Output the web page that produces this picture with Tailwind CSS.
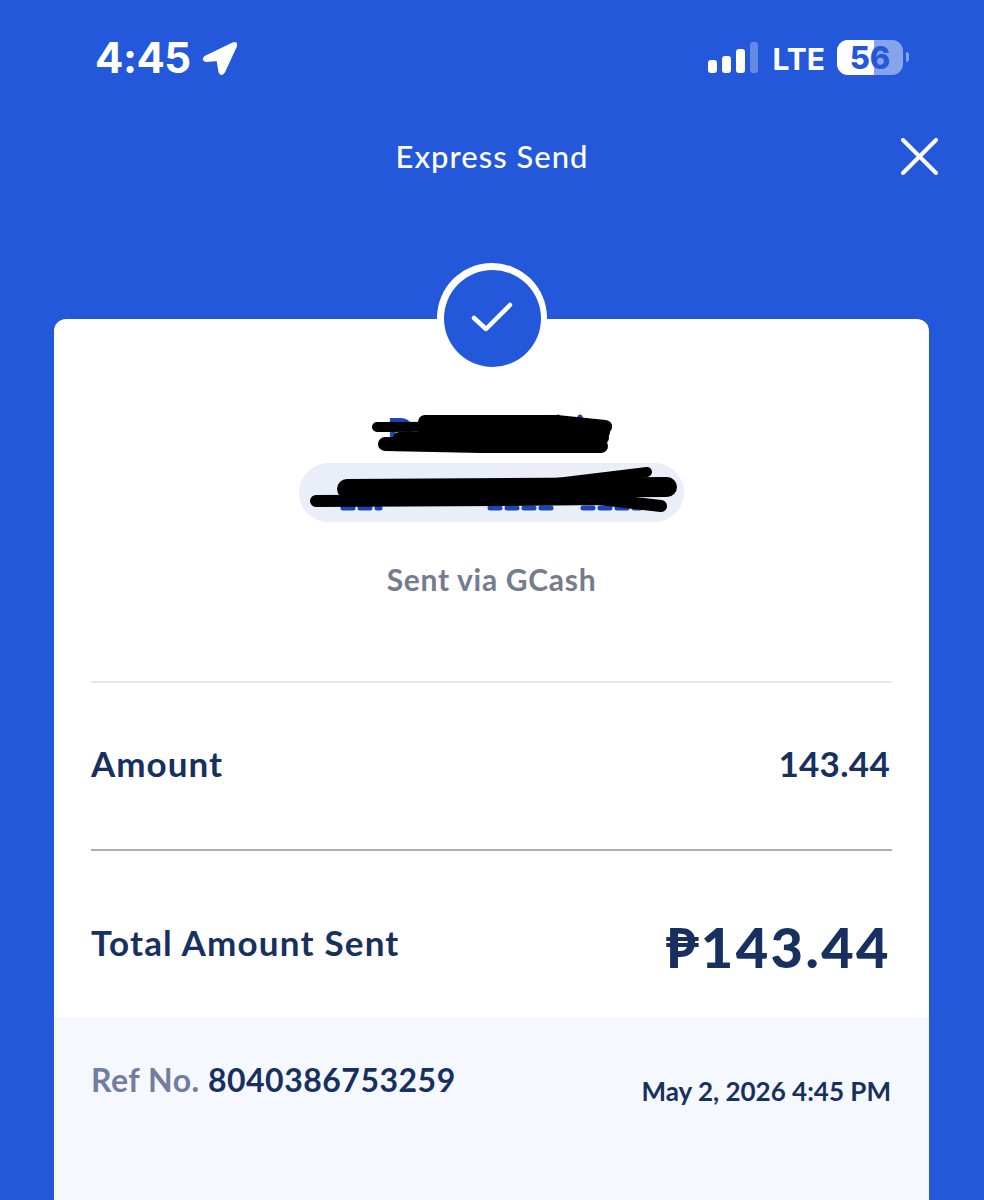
<!DOCTYPE html>
<html lang="en">
<head>
  <meta charset="UTF-8" />
  <meta name="viewport" content="width=device-width, initial-scale=1.0"/>
  <title>Express Send</title>
  <script src="https://cdn.jsdelivr.net/npm/@tailwindcss/browser@4"></script>
</head>
<body class="bg-[#2358db] h-[1200px] overflow-hidden font-['Lato','Liberation_Sans',sans-serif]">

  <!-- Status bar -->
  <div class="h-[118px] pl-[95px] pr-[75px] pt-[38px] flex justify-between items-start text-white font-['Inter',sans-serif]">
    <div class="flex items-center gap-[11px] h-[40px]">
      <span class="text-[42px] leading-[40px] font-bold tracking-[-0.5px]">4:45</span>
      <svg class="w-[36px] h-[36px]" viewBox="0 0 36 36"><path d="M3 17 L31 3.5 Q35 2 34 6 L22 32 Q19.500 36 17.500 32 L15.500 20 L4 21 Q0 19.500 3 17 Z" fill="#fff" stroke="#fff" stroke-width="2" stroke-linejoin="round"/></svg>
    </div>
    <div class="flex items-center h-[38px]">
      <div class="flex items-end gap-[5px] h-[32px]">
        <div class="w-[9px] h-[13px] bg-white rounded-[3px]"></div>
        <div class="w-[9px] h-[17px] bg-white rounded-[3px]"></div>
        <div class="w-[9px] h-[24px] bg-white rounded-[3px]"></div>
        <div class="w-[8px] h-[31px] bg-white/30 rounded-[3px]"></div>
      </div>
      <span class="ml-[15px] mt-[3px] text-[30px] leading-[38px] font-bold">LTE</span>
      <div class="ml-[12px] relative w-[66px] h-[35px] rounded-[11px] overflow-hidden bg-white/45">
        <div class="absolute inset-y-0 left-0 w-[37px] bg-white"></div>
        <span class="absolute inset-0 text-center text-[31px] leading-[35px] font-extrabold text-[#2358db]">56</span>
      </div>
      <div class="ml-[3px] w-[3px] h-[10px] rounded-r-full bg-white/45"></div>
    </div>
  </div>

  <!-- Title -->
  <div class="relative h-[76px] flex items-center justify-center text-white">
    <span class="text-[31px] font-medium leading-none tracking-[1px]">Express Send</span>
    <svg class="absolute right-[46px] top-[20px] w-[37px] h-[37px]" viewBox="0 0 37 37"><path d="M2 2 L35 35 M35 2 L2 35" stroke="#fff" stroke-width="4" stroke-linecap="round"/></svg>
  </div>

  <!-- Receipt card -->
  <div class="relative mt-[125px] mx-[54px] w-[875px] h-[881px] bg-white rounded-t-[12px]">
    <div class="absolute left-[383px] top-[-56px] w-[110px] h-[110px] rounded-full bg-white flex items-center justify-center">
      <div class="w-[97px] h-[97px] rounded-full bg-[#2358db] flex items-center justify-center">
        <svg class="w-[42px] h-[32px]" viewBox="0 0 42 32"><path d="M3 16 L15 27 L39 3" fill="none" stroke="#fff" stroke-width="4.500" stroke-linecap="round" stroke-linejoin="round"/></svg>
      </div>
    </div>

    <!-- Recipient, scribbled out in the source -->
    <div class="relative pt-[95px] flex flex-col items-center">
      <div class="h-[38px] w-[210px] text-[#1c46b8] text-[42px] font-bold leading-[38px]">P</div>
      <div class="mt-[11px] w-[385px] h-[59px] rounded-full bg-[#e9eef8]"></div>
      <svg class="absolute left-[245px] top-[90px] w-[390px] h-[110px]" viewBox="0 0 390 110" fill="none" stroke-linecap="round">
        <path d="M259 8 L260 10 M281 8 L282 10" stroke="#1c46b8" stroke-width="5"/>
        <path d="M44 99 L81 99 M191 99 L254 99 M284 99 L341 99" stroke="#1c46b8" stroke-width="5" stroke-dasharray="10 7"/>
        <g stroke="#000">
          <path d="M78 18 L308 17" stroke-width="10"/>
          <path d="M126 13 L258 13 L306 18" stroke-width="14"/>
          <path d="M126 23 L304 23" stroke-width="14"/>
          <path d="M100 29 L304 29" stroke-width="12"/>
          <path d="M86 35 L182 37 L302 37" stroke-width="14"/>
          <path d="M48 76 L241 76 L348 63" stroke-width="10"/>
          <path d="M48 80 L368 78" stroke-width="20"/>
          <path d="M17 92 L200 91 L300 90 L362 97" stroke-width="12"/>
        </g>
      </svg>
      <div class="mt-[39px] text-[30px] leading-[36px] font-bold text-[#747c8e] tracking-[0.7px]">Sent via GCash</div>
    </div>

    <!-- Amount rows -->
    <div class="mx-[37px] mt-[84px] border-t-2 border-[#e6e9ee] h-[170px] border-b-2 border-b-[#a7afbd] flex justify-between items-center text-[#17305f] font-bold pb-[6px]">
      <span class="text-[35px] tracking-[1px]">Amount</span>
      <span class="text-[35px] tracking-[0.3px] pr-[2px]">143.44</span>
    </div>
    <div class="mx-[37px] h-[166px] flex justify-between items-center text-[#17305f] font-bold">
      <span class="text-[35px] tracking-[1.2px] pt-[16px]">Total Amount Sent</span>
      <span class="text-[56px] font-black leading-none tracking-[2.4px] pt-[26px] pr-[1px]">₱143.44</span>
    </div>

    <!-- Reference footer -->
    <div class="bg-[#f5f8fe] h-[183px] px-[37px] pt-[44px] flex justify-between items-start">
      <div class="text-[32px] leading-[38px] font-bold tracking-[0.5px] text-[#17305f]"><span class="text-[#717e9e]">Ref No.</span> 8040386753259</div>
      <div class="mt-[14px] text-[26px] leading-[32px] font-bold text-[#17305f] pr-[1px]">May 2, 2026 4:45 PM</div>
    </div>
  </div>
</body>
</html>
